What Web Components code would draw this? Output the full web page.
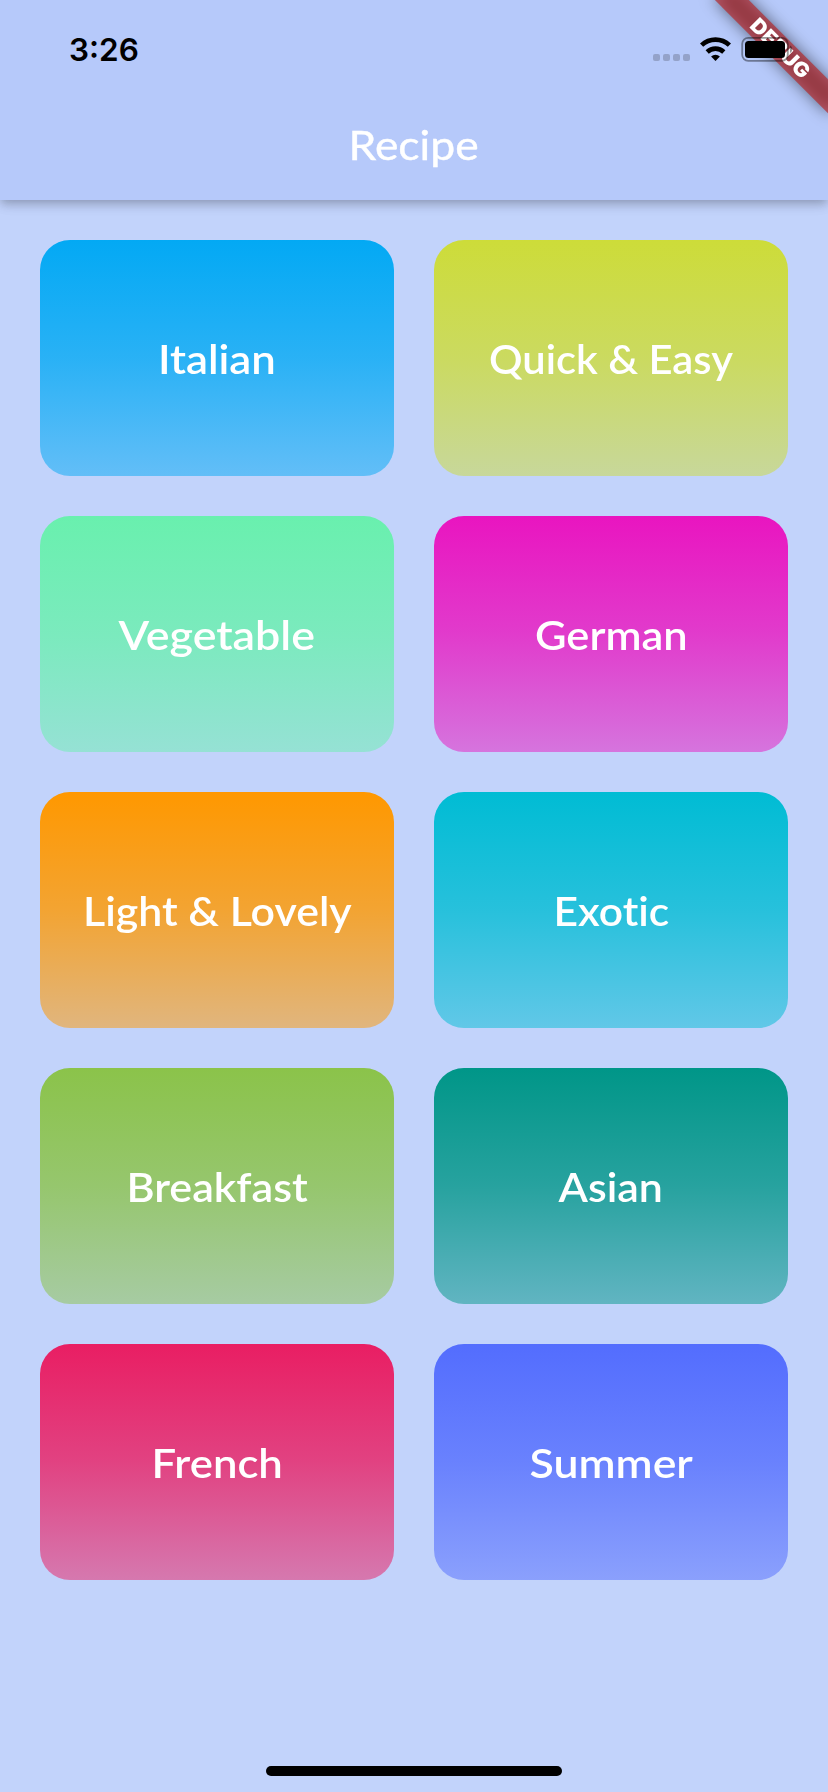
<!DOCTYPE html>
<html lang="en">
<head>
<meta charset="utf-8">
<title>Recipe</title>
<style>
html,body{margin:0;padding:0}
body{width:828px;height:1792px;overflow:hidden;background:#c2d3fb;font-family:"Lato",sans-serif;font-variant-ligatures:none}
</style>
</head>
<body>
<recipe-app></recipe-app>
<script>
const define = (name, html, setup) => customElements.define(name, class extends HTMLElement {
  connectedCallback() {
    if (this.shadowRoot) return;
    const t = document.createElement('template');
    t.innerHTML = html;
    this.attachShadow({mode: 'open'}).append(t.content.cloneNode(true));
    if (setup) setup(this, this.shadowRoot);
  }
});

// Stretches its text so that it takes exactly the advance given by "width".
define('fit-text', `
<style>
:host{display:inline-block;white-space:nowrap}
span{display:inline-block}
</style><span><slot></slot></span>`, (host, root) => {
  const span = root.querySelector('span');
  const scale = Number(host.getAttribute('width')) / span.offsetWidth;
  span.style.transform = 'scaleX(' + scale + ')';
});

define('status-bar', `
<style>
:host{display:flex;height:88px;box-sizing:border-box;padding:0 36px 0 69px;justify-content:space-between;align-items:flex-start;color:#000;position:relative;z-index:3}
.time{font:600 31.5px/38px "Inter",sans-serif;margin-top:31px}
.icons{display:flex;margin-top:35px}
svg{display:block}
</style>
<fit-text class="time" width="70">3:26</fit-text>
<div class="icons"><svg width="140" height="30" viewBox="652 35 140 30">
<g fill="#94a2c9"><rect x="653" y="54" width="7" height="7" rx="2"/><rect x="663" y="54" width="7" height="7" rx="2"/><rect x="673" y="54" width="7" height="7" rx="2"/><rect x="683" y="54" width="7" height="7" rx="2"/></g>
<g fill="none" stroke="#000" stroke-width="4.6"><path d="M701.6 45.2a20 20 0 0 1 27.8 0"/><path d="M707.2 52a12 12 0 0 1 16.6 0"/></g>
<path d="M715.5 61l-4.4-4.4a6.3 6.3 0 0 1 8.8 0z"/>
<rect x="742.2" y="37.8" width="45.6" height="23" rx="6" fill="none" stroke="#000" stroke-opacity=".4" stroke-width="1.8"/>
<rect x="745" y="41" width="40" height="17" rx="3.5"/>
<path d="M790 45.5c3 1.2 3 6.3 0 7.5z" fill-opacity=".4"/>
</svg></div>`);

define('app-bar', `
<style>
:host{display:flex;flex-direction:column;height:200px;background:#b6c9fa;box-shadow:0 4px 8px -2px rgba(0,0,0,.15),0 6px 10px 0 rgba(0,0,0,.1),0 2px 16px 0 rgba(0,0,0,.08);position:relative}
.title{flex:1;display:flex;align-items:center;justify-content:center;color:#fff;font-size:40px;line-height:48px;padding-top:1px;-webkit-text-stroke:.4px #fff}
</style>
<status-bar></status-bar>
<div class="title"><slot></slot></div>`);

// Corner ribbon, drawn below the status icons.
define('debug-banner', `
<style>
:host{position:absolute;top:0;right:0;width:160px;height:160px;overflow:hidden;z-index:2}
.turn{position:absolute;left:160px;top:0;width:0;height:0;transform:rotate(45deg)}
.shade,.band{position:absolute;left:-80px;top:56px;width:160px;height:24px}
.shade{background:rgba(0,0,0,.5);filter:blur(8px)}
.band{background:rgba(183,28,28,.627);color:#fff;font:900 20.4px/24px "Inter",sans-serif;text-align:center}
</style>
<div class="turn"><div class="shade"></div><div class="band"><fit-text width="75">DEBUG</fit-text></div></div>`);

define('recipe-card', `
<style>
:host{display:flex;align-items:center;justify-content:center;height:236px;box-sizing:border-box;padding-top:2px;border-radius:30px;color:#fff;font-size:40px;font-weight:600;line-height:48px;background:linear-gradient(var(--c),color-mix(in srgb,var(--c) 80%,transparent) 50%,color-mix(in srgb,var(--c) 50%,transparent))}
</style><slot></slot>`, host => host.style.setProperty('--c', host.getAttribute('color')));

define('home-indicator', `
<style>:host{display:block;width:296px;height:10px;border-radius:5px;background:#000;margin:auto auto 16px}</style>`);

define('recipe-app', `
<style>
:host{display:flex;flex-direction:column;width:828px;height:1792px;position:relative;background:#c2d3fb}
main{display:grid;grid-template-columns:1fr 1fr;gap:40px;padding:40px}
</style>
<app-bar><fit-text width="130">Recipe</fit-text></app-bar>
<debug-banner></debug-banner>
<main>
<recipe-card color="#03a9f4"><fit-text width="118">Italian</fit-text></recipe-card>
<recipe-card color="#cddc39"><fit-text width="244">Quick &amp; Easy</fit-text></recipe-card>
<recipe-card color="#69f0ae"><fit-text width="197">Vegetable</fit-text></recipe-card>
<recipe-card color="#e915c0"><fit-text width="153">German</fit-text></recipe-card>
<recipe-card color="#ff9800"><fit-text width="269">Light &amp; Lovely</fit-text></recipe-card>
<recipe-card color="#00bcd4"><fit-text width="116">Exotic</fit-text></recipe-card>
<recipe-card color="#8bc34a"><fit-text width="181">Breakfast</fit-text></recipe-card>
<recipe-card color="#009688"><fit-text width="104">Asian</fit-text></recipe-card>
<recipe-card color="#e91e63"><fit-text width="131">French</fit-text></recipe-card>
<recipe-card color="#536dfe"><fit-text width="163">Summer</fit-text></recipe-card>
</main>
<home-indicator></home-indicator>`);
</script>
</body>
</html>
